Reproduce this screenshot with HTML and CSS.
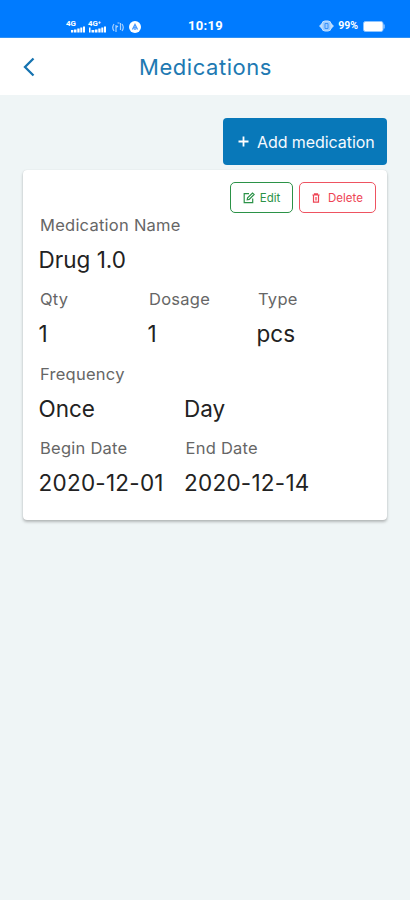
FILE: index.html
```html
<!DOCTYPE html>
<html lang="en">
<head>
<meta charset="utf-8">
<title>Medications</title>
<link rel="stylesheet" href="styles.css">
</head>
<body>
<div class="status">
  <div class="signals">
    <svg width="78" height="16" viewBox="0 0 78 16" fill="#fff">
      <text class="net" x="0" y="6.5" textLength="10" lengthAdjust="spacingAndGlyphs">4G</text>
      <path d="M5 11h2.300v2.500H5zM8 10.500h2.500v3H8zM11.300 9.500h2.300v4h-2.300zM14.300 8.500h2v5h-2zM17 7.500h2v6h-2z"/>
      <text class="net" x="22" y="6.500" textLength="13" lengthAdjust="spacingAndGlyphs">4G⁺</text>
      <path d="M23 8.500h1.500v5H23zM25.500 11h2.800v2.500h-2.800zM29 10.500h2.500v3H29zM32.300 9.500h2.300v4h-2.300zM35.300 8.500h2v5h-2zM38 7.500h2v6h-2z"/>
      <g fill="none" stroke="#a9d2ff" stroke-width="1.200"><path d="M48 5q-2.500 3.500 0 7M56 5q2.500 3.500 0 7M50 13V6M54.500 11V4M51.500 4h2M50 8.500l2-1.500"/></g>
      <circle cx="69" cy="8" r="6"/>
      <path d="M66.500 10.500l2.500-5 2.500 5M69 8v3" fill="none" stroke="#4598ff" stroke-width="1.400"/>
    </svg>
  </div>
  <div class="clock">10:19</div>
  <div class="power">
    <svg width="15" height="12" viewBox="0 0 15 12"><path d="M0 6l3-3v6zM15 6l-3-3v6z" fill="#b9dcff"/><rect x="3" y="1" width="9" height="10" rx="3" fill="#9acbff" stroke="#c4e1ff"/><path d="M6 3.500v5h3v-5z" fill="none" stroke="#3a92fa"/></svg>
    <span class="percent">99%</span>
    <svg width="23" height="11" viewBox="0 0 23 11"><rect x=".5" y=".5" width="19.500" height="10" rx="2" fill="#fff" stroke="#8fc5ff"/><path d="M21 3.500v4" stroke="#8fc5ff" stroke-width="1.500"/></svg>
  </div>
</div>
<header class="topbar">
  <svg class="back" width="14" height="22" viewBox="0 0 14 22"><path d="M11.500 2.500L3 11l8.500 8.500" fill="none" stroke="#1673b0" stroke-width="2.300"/></svg>
  <h1>Medications</h1>
</header>
<main>
  <button class="add"><svg width="11" height="11" viewBox="0 0 11 11"><path d="M5.500 .5v10M.5 5.500h10" stroke="#fff" stroke-width="1.800"/></svg><span>Add medication</span></button>
  <section class="card">
    <div class="actions">
      <button class="edit"><svg width="12" height="12" viewBox="0 0 12 12" fill="none" stroke="currentColor" stroke-width="1.200"><path d="M6 1.700H1.200v9h8.500V6.500M4.200 7.800l.4-2L9.500 1l1.600 1.500-4.900 4.900z"/></svg><span>Edit</span></button>
      <button class="delete"><svg width="8" height="10" viewBox="0 0 8 10" fill="none" stroke="currentColor" stroke-width="1.200"><path d="M.4 2h7.200M2.500 1.800V.8h3v1M1.500 2v7.200h5V2M4 4v3.500"/></svg><span>Delete</span></button>
    </div>
    <dl class="row"><div><dt>Medication Name</dt><dd>Drug 1.0</dd></div></dl>
    <dl class="row thirds"><div><dt>Qty</dt><dd>1</dd></div><div><dt>Dosage</dt><dd>1</dd></div><div><dt>Type</dt><dd>pcs</dd></div></dl>
    <dl class="row halves"><div><dt>Frequency</dt><dd>Once</dd></div><div><dt>&nbsp;</dt><dd>Day</dd></div></dl>
    <dl class="row halves"><div><dt>Begin Date</dt><dd class="date">2020-12-01</dd></div><div><dt>End Date</dt><dd class="date">2020-12-14</dd></div></dl>
  </section>
</main>
</body>
</html>
```
FILE: styles.css
```css
* { box-sizing: border-box; }
body { margin: 0; min-height: 900px; background: #eff5f6; font-family: Inter, "Liberation Sans", sans-serif; }
.status { height: 38px; padding: 13px 23px 0 66px; background: #007bff; border-bottom: 1px solid #2f91f5; color: #fff; display: grid; grid-template-columns: 122px 1fr auto; align-items: center; }
.signals { height: 24px; padding-top: 5px; }
.signals svg { display: block; }
.net { font: 700 7px Roboto, sans-serif; }
.clock { font: 700 13px/24px Roboto, sans-serif; letter-spacing: .3px; padding-top: 1px; }
.power { display: flex; align-items: center; height: 24px; padding-top: 1px; position: relative; left: -1px; }
.percent { font: 700 10.5px/24px Roboto, sans-serif; margin: 0 5px 0 4px; }
.topbar { height: 57px; background: #fff; display: flex; align-items: center; padding-left: 22px; }
.back { flex: none; }
h1 { margin: 0 0 0 103px; color: #2079b2; font-size: 22px; line-height: 28px; font-weight: 400; letter-spacing: .55px; }
main { padding: 23px 23px 0; display: flex; flex-direction: column; }
button { display: flex; align-items: center; font-family: inherit; margin: 0; padding: 0; }
.add { align-self: flex-end; width: 164px; height: 47px; border: 0; border-radius: 4px; background: #0878b9; color: #f5faff; font-size: 16px; letter-spacing: -.07px; padding-left: 15px; gap: 8px; white-space: nowrap; }
.card { margin-top: 5px; height: 350px; background: #fff; border-radius: 4px; padding: 12px 11px 0 15px; box-shadow: 0 2px 3px rgba(0,0,0,.25), 0 0 1px rgba(0,0,0,.15); }
.actions { display: flex; justify-content: flex-end; gap: 6px; height: 30px; }
.actions button { height: 31px; border-radius: 5px; background: #fff; font-size: 11.500px; }
.edit { width: 63px; border: 1px solid #2b9247; color: #2b9247; justify-content: center; gap: 5px; }
.delete { width: 77px; border: 1px solid #ee5361; color: #ee4454; justify-content: center; gap: 8px; }
.row { margin: 0; height: 74.300px; display: grid; }
.thirds { grid-template-columns: 109px 109px 1fr; }
.halves { grid-template-columns: 145.500px 1fr; }
dt { font-size: 16.500px; line-height: 26px; letter-spacing: .25px; color: #666; font-weight: 400; padding-left: 2px; }
dd { margin: 0; padding: 6px 0 0 .5px; font-size: 22.500px; line-height: 32px; color: #222; font-weight: 400; white-space: nowrap; }
.date { letter-spacing: .25px; }
```
